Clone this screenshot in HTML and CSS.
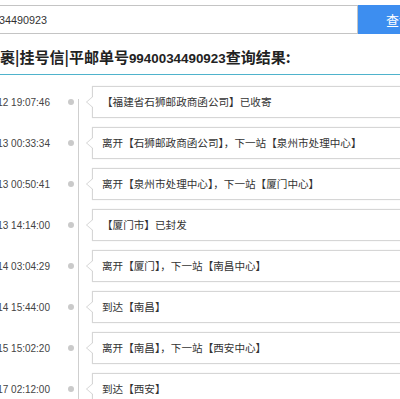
FILE: index.html
```html
<!DOCTYPE html>
<html lang="zh-CN">
<head>
    <meta charset="UTF-8">
    <meta name="viewport" content="width=device-width, initial-scale=1.0">
    <title>邮件查询结果</title>
    <link rel="stylesheet" href="styles.css">
</head>
<body>
    <div class="search">
        <input type="text" class="search-input" value="9940034490923">
        <button class="search-btn">查询</button>
    </div>

    <h2 class="result-title">包裹|挂号信|平邮单号<span class="num">9940034490923</span>查询结果:</h2>

    <div class="timeline">
        <div class="row">
            <div class="time"><span>2017-03-12 19:07:46</span></div>
            <div class="dot"></div>
            <div class="card">【福建省石狮邮政商函公司】已收寄</div>
        </div>
        <div class="row">
            <div class="time"><span>2017-03-13 00:33:34</span></div>
            <div class="dot"></div>
            <div class="card">离开【石狮邮政商函公司】，下一站【泉州市处理中心】</div>
        </div>
        <div class="row">
            <div class="time"><span>2017-03-13 00:50:41</span></div>
            <div class="dot"></div>
            <div class="card">离开【泉州市处理中心】，下一站【厦门中心】</div>
        </div>
        <div class="row">
            <div class="time"><span>2017-03-13 14:14:00</span></div>
            <div class="dot"></div>
            <div class="card">【厦门市】已封发</div>
        </div>
        <div class="row">
            <div class="time"><span>2017-03-14 03:04:29</span></div>
            <div class="dot"></div>
            <div class="card">离开【厦门】，下一站【南昌中心】</div>
        </div>
        <div class="row">
            <div class="time"><span>2017-03-14 15:44:00</span></div>
            <div class="dot"></div>
            <div class="card">到达【南昌】</div>
        </div>
        <div class="row">
            <div class="time"><span>2017-03-15 15:02:20</span></div>
            <div class="dot"></div>
            <div class="card">离开【南昌】，下一站【西安中心】</div>
        </div>
        <div class="row">
            <div class="time"><span>2017-03-17 02:12:00</span></div>
            <div class="dot"></div>
            <div class="card">到达【西安】</div>
        </div>
    </div>
</body>
</html>
```

FILE: styles.css
```css
body {
    margin: 0;
    overflow: hidden;
    background: #fff;
    color: #333;
    font-family: "Liberation Sans", "Noto Sans CJK SC", sans-serif;
}
.search {
    display: flex;
    margin: 5px -40px 0 -38px;
    height: 29px;
}
.search-input {
    flex: 1;
    box-sizing: border-box;
    height: 29px;
    margin: 0;
    padding: 0 6px;
    border: 1px solid #c4c4c4;
    font-family: "Liberation Sans", sans-serif;
    font-size: 10.8px;
    color: #333;
    outline: none;
}
.search-btn {
    width: 82px;
    height: 29px;
    margin: 0;
    border: none;
    background: #3d8ef0;
    color: #fff;
    font-family: "Noto Sans CJK SC", sans-serif;
    font-size: 13px;
    padding: 0;
}
.result-title {
    margin: 12px 0 0;
    padding-bottom: 4px;
    border-bottom: 1px solid #4fb3cc;
    font-family: "Noto Sans CJK SC", sans-serif;
    font-size: 15px;
    font-weight: bold;
    line-height: 22px;
    color: #222;
    text-indent: -15px;
    white-space: nowrap;
}
.result-title .num {
    font-family: "Liberation Sans", sans-serif;
    font-size: 13.4px;
}
.timeline {
    margin: 11px -20px 0 0;
    background: linear-gradient(#cfcfcf, #cfcfcf) no-repeat 78px 13px / 1px 100%;
}
.row {
    display: flex;
    align-items: center;
    height: 32px;
    margin-bottom: 9px;
}
.time {
    width: 50px;
    display: flex;
    justify-content: flex-end;
    white-space: nowrap;
    font-size: 10px;
    color: #444;
}
.dot {
    width: 6px;
    height: 6px;
    margin: 0 18px;
    border-radius: 50%;
    background: #cacaca;
}
.card {
    flex: 1;
    position: relative;
    box-sizing: border-box;
    height: 32px;
    padding: 0 9px;
    border: 1px solid #d6d6d6;
    box-shadow: 0 0 1px rgba(0,0,0,0.12);
    background: #fff;
    font-family: "Noto Sans CJK SC", sans-serif;
    font-size: 10.6px;
    line-height: 30px;
    color: #333;
    white-space: nowrap;
}
.card::before,
.card::after {
    content: "";
    position: absolute;
    top: 9px;
    border-style: solid;
    border-color: transparent;
}
.card::before {
    left: -7px;
    border-width: 6px 7px 6px 0;
    border-right-color: #d0d0d0;
}
.card::after {
    left: -6px;
    border-width: 6px 7px 6px 0;
    border-right-color: #fff;
}
```
